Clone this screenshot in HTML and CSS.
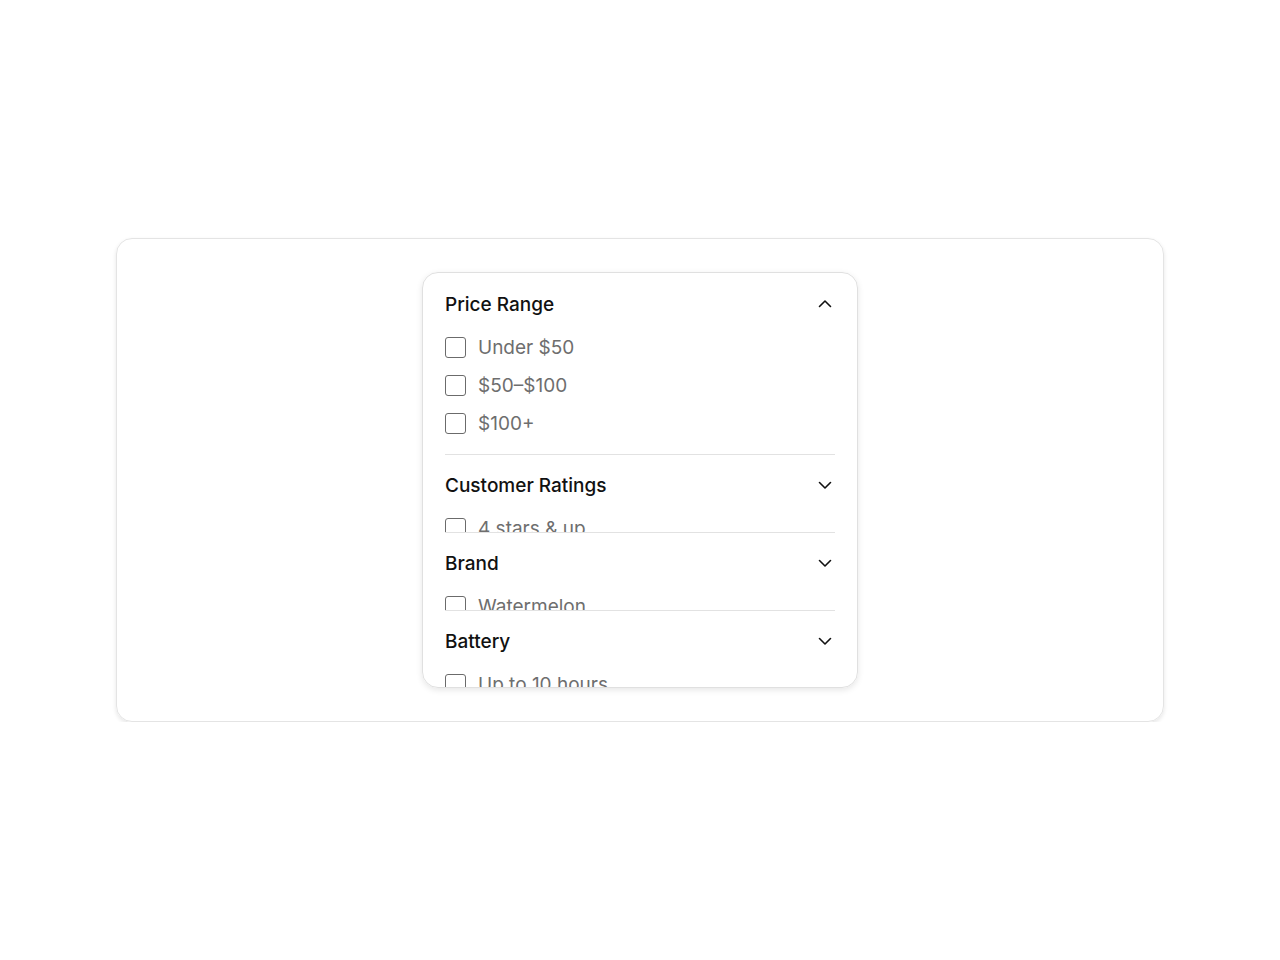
FILE: index.html
```html
<!DOCTYPE html>
<html lang="en">
<head>
    <meta charset="UTF-8">
    <meta name="viewport" content="width=device-width, initial-scale=1.0">
    <title>Filters</title>
    <link rel="stylesheet" href="styles.css">
</head>
<body>
    <div class="frame">
        <div class="filters">
            <!-- open section -->
            <section class="filter-group open">
                <div class="group-head">
                    <span class="group-title">Price Range</span>
                    <svg class="chevron" width="14" height="14" viewBox="0 0 14 14"><path d="M1.5 9.5 7 4l5.5 5.5" fill="none" stroke="#111" stroke-width="1.6" stroke-linecap="round" stroke-linejoin="round"/></svg>
                </div>
                <ul class="options">
                    <li><span class="box"></span>Under $50</li>
                    <li><span class="box"></span>$50–$100</li>
                    <li><span class="box"></span>$100+</li>
                </ul>
            </section>
            <section class="filter-group">
                <div class="group-head">
                    <span class="group-title">Customer Ratings</span>
                    <svg class="chevron" width="14" height="14" viewBox="0 0 14 14"><path d="M1.5 4.5 7 10l5.5-5.5" fill="none" stroke="#111" stroke-width="1.6" stroke-linecap="round" stroke-linejoin="round"/></svg>
                </div>
                <ul class="options">
                    <li><span class="box"></span>4 stars &amp; up</li>
                    <li><span class="box"></span>3 stars &amp; up</li>
                </ul>
            </section>
            <section class="filter-group">
                <div class="group-head">
                    <span class="group-title">Brand</span>
                    <svg class="chevron" width="14" height="14" viewBox="0 0 14 14"><path d="M1.5 4.5 7 10l5.5-5.5" fill="none" stroke="#111" stroke-width="1.6" stroke-linecap="round" stroke-linejoin="round"/></svg>
                </div>
                <ul class="options">
                    <li><span class="box"></span>Watermelon</li>
                    <li><span class="box"></span>Citrus</li>
                </ul>
            </section>
            <section class="filter-group">
                <div class="group-head">
                    <span class="group-title">Battery</span>
                    <svg class="chevron" width="14" height="14" viewBox="0 0 14 14"><path d="M1.5 4.5 7 10l5.5-5.5" fill="none" stroke="#111" stroke-width="1.6" stroke-linecap="round" stroke-linejoin="round"/></svg>
                </div>
                <ul class="options">
                    <li><span class="box"></span>Up to 10 hours</li>
                    <li><span class="box"></span>10+ hours</li>
                </ul>
            </section>
        </div>
    </div>
</body>
</html>
```

FILE: styles.css
```css
body {
    font-family: Inter, "Noto Sans", sans-serif;
    margin: 0;
    padding: 238px 116px 0;
    background-color: #ffffff;
    color: #111111;
}
.frame {
    border: 1px solid #e4e4e4;
    border-radius: 16px;
    box-shadow: 0 2px 4px rgba(0, 0, 0, 0.1);
    padding: 33px 0;
    display: flex;
    justify-content: center;
}
.filters {
    width: 436px;
    box-sizing: border-box;
    height: 416px;
    border: 1px solid #e0e0e0;
    border-radius: 16px;
    box-shadow: 0 2px 6px rgba(0, 0, 0, 0.1);
    padding: 0 22px;
    overflow: hidden;
}
.filter-group {
    padding-top: 13px;
    border-bottom: 1px solid #e2e2e2;
}
.filter-group.open {
    padding-top: 14px;
}
.filter-group:last-child {
    border-bottom: none;
}
.group-head {
    height: 34px;
    display: flex;
    align-items: center;
    justify-content: space-between;
}
.group-title {
    font-size: 19px;
    font-weight: 500;
}
.chevron {
    margin-right: 3px;
}
.options {
    list-style: none;
    margin: 7px 0 0;
    padding: 0;
    height: 23px;
    overflow: hidden;
}
.open .options {
    height: auto;
    padding-bottom: 12px;
}
.options li {
    height: 38px;
    display: flex;
    align-items: center;
    gap: 12px;
    font-size: 19px;
    color: #6e6e6e;
}
.box {
    width: 21px;
    height: 21px;
    box-sizing: border-box;
    border: 1.5px solid #6b6b6b;
    border-radius: 3px;
}
```
